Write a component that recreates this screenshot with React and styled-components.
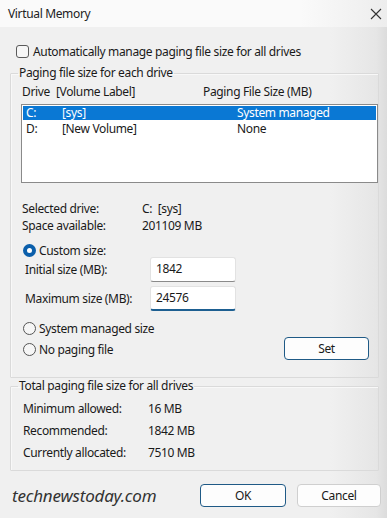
import { Fragment } from "react";
import styled, { createGlobalStyle } from "styled-components";

const GlobalStyle = createGlobalStyle`
  html, body {
    margin: 0;
    padding: 0;
  }
  body {
    width: 387px;
    height: 518px;
    overflow: hidden;
    font-family: "Noto Sans", "Open Sans", sans-serif;
    font-size: 12px;
    letter-spacing: -0.35px;
    color: #1a1a1a;
  }
`;

const Window = styled.div`
  width: 387px;
  height: 518px;
  display: flex;
  flex-direction: column;
  background: linear-gradient(to right, #f0f0f0 0, #f0f0f0 330px, #e6e6e6 376px, #dcdcdc 387px);
`;

const TitleBar = styled.div`
  height: 27px;
  display: flex;
  align-items: center;
  justify-content: space-between;
  padding: 0 5px 0 8px;
  background: linear-gradient(to right, #fafafa 0, #fafafa 300px, #ededed 387px);
  line-height: 14px;
`;

const Title = styled.span`
  color: #222;
`;

const CloseIcon = () => (
  <svg width="12" height="12" viewBox="0 0 12 12">
    <path d="M1 1 L11 11 M11 1 L1 11" stroke="#333" strokeWidth="1.1" fill="none" />
  </svg>
);

const Body = styled.div`
  display: flex;
  flex-direction: column;
  padding: 17px 8px 0 10px;
`;

const CheckRow = styled.label`
  display: flex;
  align-items: center;
  gap: 4px;
  height: 14px;
  padding-left: 6px;
`;

const Check = styled.span`
  width: 11px;
  height: 11px;
  border: 1px solid #5a5a5a;
  border-radius: 3px;
  background: #f6f6f6;
`;

const Group = styled.fieldset`
  margin: ${(p) => p.$top || 0}px 0 0 0;
  padding: 0 0 ${(p) => p.$bottom || 0}px 0;
  width: 367px;
  border: 1px solid #dadada;
  border-radius: 1px;
  box-shadow: inset 1px 1px 0 #f8f8f8;
  min-width: 0;
`;

const Legend = styled.legend`
  margin-left: 7px;
  padding: 0 1px;
  line-height: 16px;
  color: #1a1a1a;
`;

const HeaderRow = styled.div`
  display: grid;
  grid-template-columns: 34px 147px 1fr;
  margin-top: 3px;
  padding-left: 11px;
  line-height: 16px;
`;

const ListBox = styled.div`
  margin: 4px 0 0 10px;
  width: 355px;
  height: 77px;
  padding: 0;
  border: 1px solid #8a8a8a;
  background: #fff;
`;

const ListRow = styled.div`
  display: grid;
  grid-template-columns: 36px 175px 1fr;
  height: 16px;
  line-height: 16px;
  padding-left: 3px;
  margin: 0 1px;
  background: ${(p) =>
    p.$selected ? "linear-gradient(#0a78d4, #0a78d4) 0 1px / 100% 14px no-repeat" : "transparent"};
  color: ${(p) => (p.$selected ? "#fff" : "#1a1a1a")};
`;

const InfoGrid = styled.div`
  display: grid;
  grid-template-columns: ${(p) => p.$labelWidth}px 1fr;
  grid-auto-rows: ${(p) => p.$rowHeight}px;
  align-items: center;
  margin-top: ${(p) => p.$top}px;
  padding-left: ${(p) => p.$left}px;
`;

const RadioRow = styled.label`
  display: flex;
  align-items: center;
  gap: 3px;
  height: 14px;
  padding-left: 12px;
  margin-top: ${(p) => p.$top || 0}px;
`;

const Radio = styled.span`
  box-sizing: border-box;
  width: 13px;
  height: 13px;
  border-radius: 50%;
  border: ${(p) => (p.$checked ? "4px solid #0b5fab" : "1px solid #555")};
  background: ${(p) => (p.$checked ? "#fff" : "#f6f6f6")};
`;

const FieldRow = styled.div`
  display: grid;
  grid-template-columns: 125px 86px;
  align-items: center;
  padding-left: 14px;
  margin-top: ${(p) => p.$top || 0}px;
`;

const TextBox = styled.div`
  box-sizing: border-box;
  height: 25px;
  padding: 3px 5px 0;
  background: #fff;
  border: 1px solid #e2e2e2;
  border-bottom: ${(p) => (p.$focused ? "2px solid #1d5f91" : "1px solid #8a8a8a")};
  border-radius: 3px;
  line-height: 16px;
`;

const BottomRadioRow = styled.div`
  display: flex;
  align-items: center;
  justify-content: space-between;
  height: 23px;
  margin-top: 2px;
  padding-right: 9px;

  & > label {
    margin-top: 2px;
  }
`;

const Button = styled.button`
  box-sizing: border-box;
  width: ${(p) => p.$width}px;
  height: 23px;
  padding: 0;
  font-family: inherit;
  font-size: 12px;
  letter-spacing: inherit;
  color: #1a1a1a;
  background: #fdfdfd;
  border: 1px solid ${(p) => (p.$primary ? "#1f5a86" : "#cfcfcf")};
  border-radius: 4px;
`;

const Footer = styled.div`
  display: flex;
  align-items: center;
  margin-top: 13px;
  padding: 0 6px 0 12px;
`;

const Watermark = styled.span`
  flex: 1;
  font-family: "Noto Sans", sans-serif;
  font-style: italic;
  font-size: 17px;
  color: #333;
  letter-spacing: -0.2px;
`;

const ButtonGroup = styled.div`
  display: flex;
  gap: 11px;
`;

const drives = [
  { drive: "C:", label: "[sys]", size: "System managed", selected: true },
  { drive: "D:", label: "[New Volume]", size: "None" },
];

const totals = [
  ["Minimum allowed:", "16 MB"],
  ["Recommended:", "1842 MB"],
  ["Currently allocated:", "7510 MB"],
];

export default function App() {
  return (
    <>
      <GlobalStyle />
      <Window>
        <TitleBar>
          <Title>Virtual Memory</Title>
          <CloseIcon />
        </TitleBar>

        <Body>
          <CheckRow>
            <Check />
            Automatically manage paging file size for all drives
          </CheckRow>

          <Group $top={7} $bottom={17}>
            <Legend>Paging file size for each drive</Legend>
            <HeaderRow>
              <span>Drive</span>
              <span>[Volume Label]</span>
              <span>Paging File Size (MB)</span>
            </HeaderRow>
            <ListBox>
              {drives.map((d) => (
                <ListRow key={d.drive} $selected={d.selected}>
                  <span>{d.drive}</span>
                  <span>{d.label}</span>
                  <span>{d.size}</span>
                </ListRow>
              ))}
            </ListBox>

            <InfoGrid $labelWidth={120} $rowHeight={17} $top={17} $left={11}>
              <span>Selected drive:</span>
              <span>C:&nbsp;&nbsp;[sys]</span>
              <span>Space available:</span>
              <span>201109 MB</span>
            </InfoGrid>

            <RadioRow $top={9}>
              <Radio $checked />
              Custom size:
            </RadioRow>
            <FieldRow>
              <span>Initial size (MB):</span>
              <TextBox>1842</TextBox>
            </FieldRow>
            <FieldRow $top={4}>
              <span>Maximum size (MB):</span>
              <TextBox $focused>24576</TextBox>
            </FieldRow>

            <RadioRow $top={10}>
              <Radio />
              System managed size
            </RadioRow>
            <BottomRadioRow>
              <RadioRow>
                <Radio />
                No paging file
              </RadioRow>
              <Button $primary $width={85}>Set</Button>
            </BottomRadioRow>
          </Group>

          <Group $top={0} $bottom={7}>
            <Legend>Total paging file size for all drives</Legend>
            <InfoGrid $labelWidth={125} $rowHeight={22} $top={3} $left={12}>
              {totals.map(([label, value]) => (
                <Fragment key={label}>
                  <span>{label}</span>
                  <span>{value}</span>
                </Fragment>
              ))}
            </InfoGrid>
          </Group>
        </Body>

        <Footer>
          <Watermark>technewstoday.com</Watermark>
          <ButtonGroup>
            <Button $primary $width={86}>OK</Button>
            <Button $width={84}>Cancel</Button>
          </ButtonGroup>
        </Footer>
      </Window>
    </>
  );
}
